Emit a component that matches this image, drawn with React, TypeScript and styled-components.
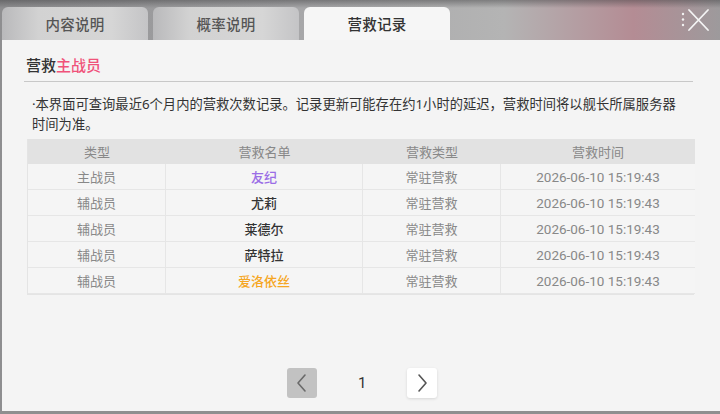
import React from "react";
import styled, { createGlobalStyle } from "styled-components";

const Global = createGlobalStyle`
  html, body { margin: 0; padding: 0; }
  body {
    width: 720px; height: 414px; overflow: hidden;
    font-family: "Noto Sans CJK SC", "Noto Sans", sans-serif;
    background: linear-gradient(90deg, #8e8e90 0%, #a6a6a8 40%, #b4b4b4 70%, #b48c94 88%, #9d9a9c 100%);
  }
`;

const Root = styled.div`
  display: flex; flex-direction: column; height: 414px;
`;

const TopBar = styled.div`
  height: 40px; display: flex; align-items: flex-end; gap: 5px;
  padding-left: 2px; box-sizing: border-box;
  background: linear-gradient(180deg, rgba(60,60,62,0.45) 0px, rgba(60,60,62,0) 8px);
`;

const Tab = styled.div<{ $active?: boolean }>`
  width: 146px; height: 33px; border-radius: 6px 6px 0 0;
  display: flex; align-items: center; justify-content: center;
  font-size: 14.5px; letter-spacing: 0.3px; font-weight: 500;
  color: ${p => (p.$active ? "#333" : "#555")};
  background: ${p => p.$active
    ? "#f6f6f6"
    : "linear-gradient(90deg, #b9b9bb 0%, #d2d2d2 25%, #d6d6d6 75%, #c4c4c6 100%)"};
`;

const Close = styled.div`
  margin-left: auto; align-self: stretch; width: 46px;
  display: flex; align-items: center; justify-content: center;
`;

const Panel = styled.div`
  flex: 1; margin-left: 2px; background: #f4f4f4;
  display: flex; flex-direction: column;
  padding: 0 27px 13px 22px; box-sizing: border-box;
  border-bottom: 3px solid #8f8f8f;
`;

const Title = styled.div`
  margin-top: 15px; height: 20px; line-height: 20px; padding-left: 2px;
  font-size: 15px; color: #333; font-weight: 500;
`;

const Pink = styled.span` color: #f0527a; `;

const Divider = styled.div`
  margin-top: 6px; height: 1px; background: #c8c8c8;
`;

const Desc = styled.div`
  margin-top: 12px; padding-left: 8px; padding-right: 2px;
  font-family: "Noto Sans", "Noto Sans CJK SC", sans-serif;
  font-size: 13.3px; line-height: 20px; color: #333; white-space: nowrap;
`;

const Table = styled.div`
  margin: 5px 0 0 3px; width: 667px;
  display: grid; grid-template-columns: 138px 197px 138px 194px;
  border: 1px solid #e4e4e4; border-top: none; box-sizing: border-box;
`;

const Head = styled.div`
  height: 25px; background: #e2e2e2; color: #888;
  display: flex; align-items: center; justify-content: center;
  font-size: 13px;
`;

const Cell = styled.div<{ $color?: string; $bold?: boolean; $last?: boolean }>`
  height: 26px; box-sizing: border-box;
  display: flex; align-items: center; justify-content: center;
  font-size: 13px; background: #f5f5f5;
  color: ${p => p.$color || "#888"};
  font-weight: ${p => (p.$bold ? 500 : 400)};
  border-bottom: 1px solid #e6e6e6;
  border-right: ${p => (p.$last ? "none" : "1px solid #e6e6e6")};
`;

const Time = styled.span`
  font-family: "Roboto", "Noto Sans", sans-serif; font-size: 13.5px;
`;

const Pager = styled.div`
  margin-top: auto; display: flex; align-items: center; justify-content: center;
  gap: 41px; padding-left: 7px;
`;

const PageBtn = styled.div<{ $disabled?: boolean }>`
  width: 30px; height: 30px; border-radius: 3px;
  display: flex; align-items: center; justify-content: center;
  background: ${p => (p.$disabled ? "#c2c2c2" : "#ffffff")};
  box-shadow: ${p => (p.$disabled ? "none" : "0 1px 3px rgba(0,0,0,0.12)")};
`;

const PageNum = styled.div`
  font-family: "Roboto", sans-serif;
  font-size: 15px; color: #333; width: 8px; text-align: center;
`;

const rows = [
  { type: "主战员", name: "友纪", color: "#9b6ee6" },
  { type: "辅战员", name: "尤莉", color: "#333" },
  { type: "辅战员", name: "莱德尔", color: "#333" },
  { type: "辅战员", name: "萨特拉", color: "#333" },
  { type: "辅战员", name: "爱洛依丝", color: "#f5a623" },
];

const Chevron = ({ dir }: { dir: "l" | "r" }) => (
  <svg width="14" height="22" viewBox="0 0 14 22">
    <path
      d={dir === "l" ? "M10 3 L3 11 L10 19" : "M4 3 L11 11 L4 19"}
      fill="none" stroke={dir === "l" ? "#6a6a6a" : "#555"} strokeWidth="1.6"
      strokeLinecap="round" strokeLinejoin="round"
    />
  </svg>
);

export default function App() {
  return (
    <Root>
      <Global />
      <TopBar>
        <Tab>内容说明</Tab>
        <Tab>概率说明</Tab>
        <Tab $active>营救记录</Tab>
        <Close>
          <svg width="46" height="40" viewBox="0 0 46 40">
            <circle cx="9" cy="14" r="1.2" fill="#f2f2f2" />
            <circle cx="9" cy="19.5" r="1.2" fill="#f2f2f2" />
            <circle cx="9" cy="25" r="1.2" fill="#f2f2f2" />
            <path d="M15 10 L34 30 M34 10 L15 30" stroke="#f4f4f4" strokeWidth="1.8" strokeLinecap="round" />
          </svg>
        </Close>
      </TopBar>
      <Panel>
        <Title>营救<Pink>主战员</Pink></Title>
        <Divider />
        <Desc>
          ·本界面可查询最近6个月内的营救次数记录。记录更新可能存在约1小时的延迟，营救时间将以舰长所属服务器
          <br />
          时间为准。
        </Desc>
        <Table>
          <Head>类型</Head>
          <Head>营救名单</Head>
          <Head>营救类型</Head>
          <Head>营救时间</Head>
          {rows.map((r, i) => (
            <React.Fragment key={i}>
              <Cell>{r.type}</Cell>
              <Cell $color={r.color} $bold>{r.name}</Cell>
              <Cell>常驻营救</Cell>
              <Cell $last><Time>2026-06-10 15:19:43</Time></Cell>
            </React.Fragment>
          ))}
        </Table>
        <Pager>
          <PageBtn $disabled><Chevron dir="l" /></PageBtn>
          <PageNum>1</PageNum>
          <PageBtn><Chevron dir="r" /></PageBtn>
        </Pager>
      </Panel>
    </Root>
  );
}
